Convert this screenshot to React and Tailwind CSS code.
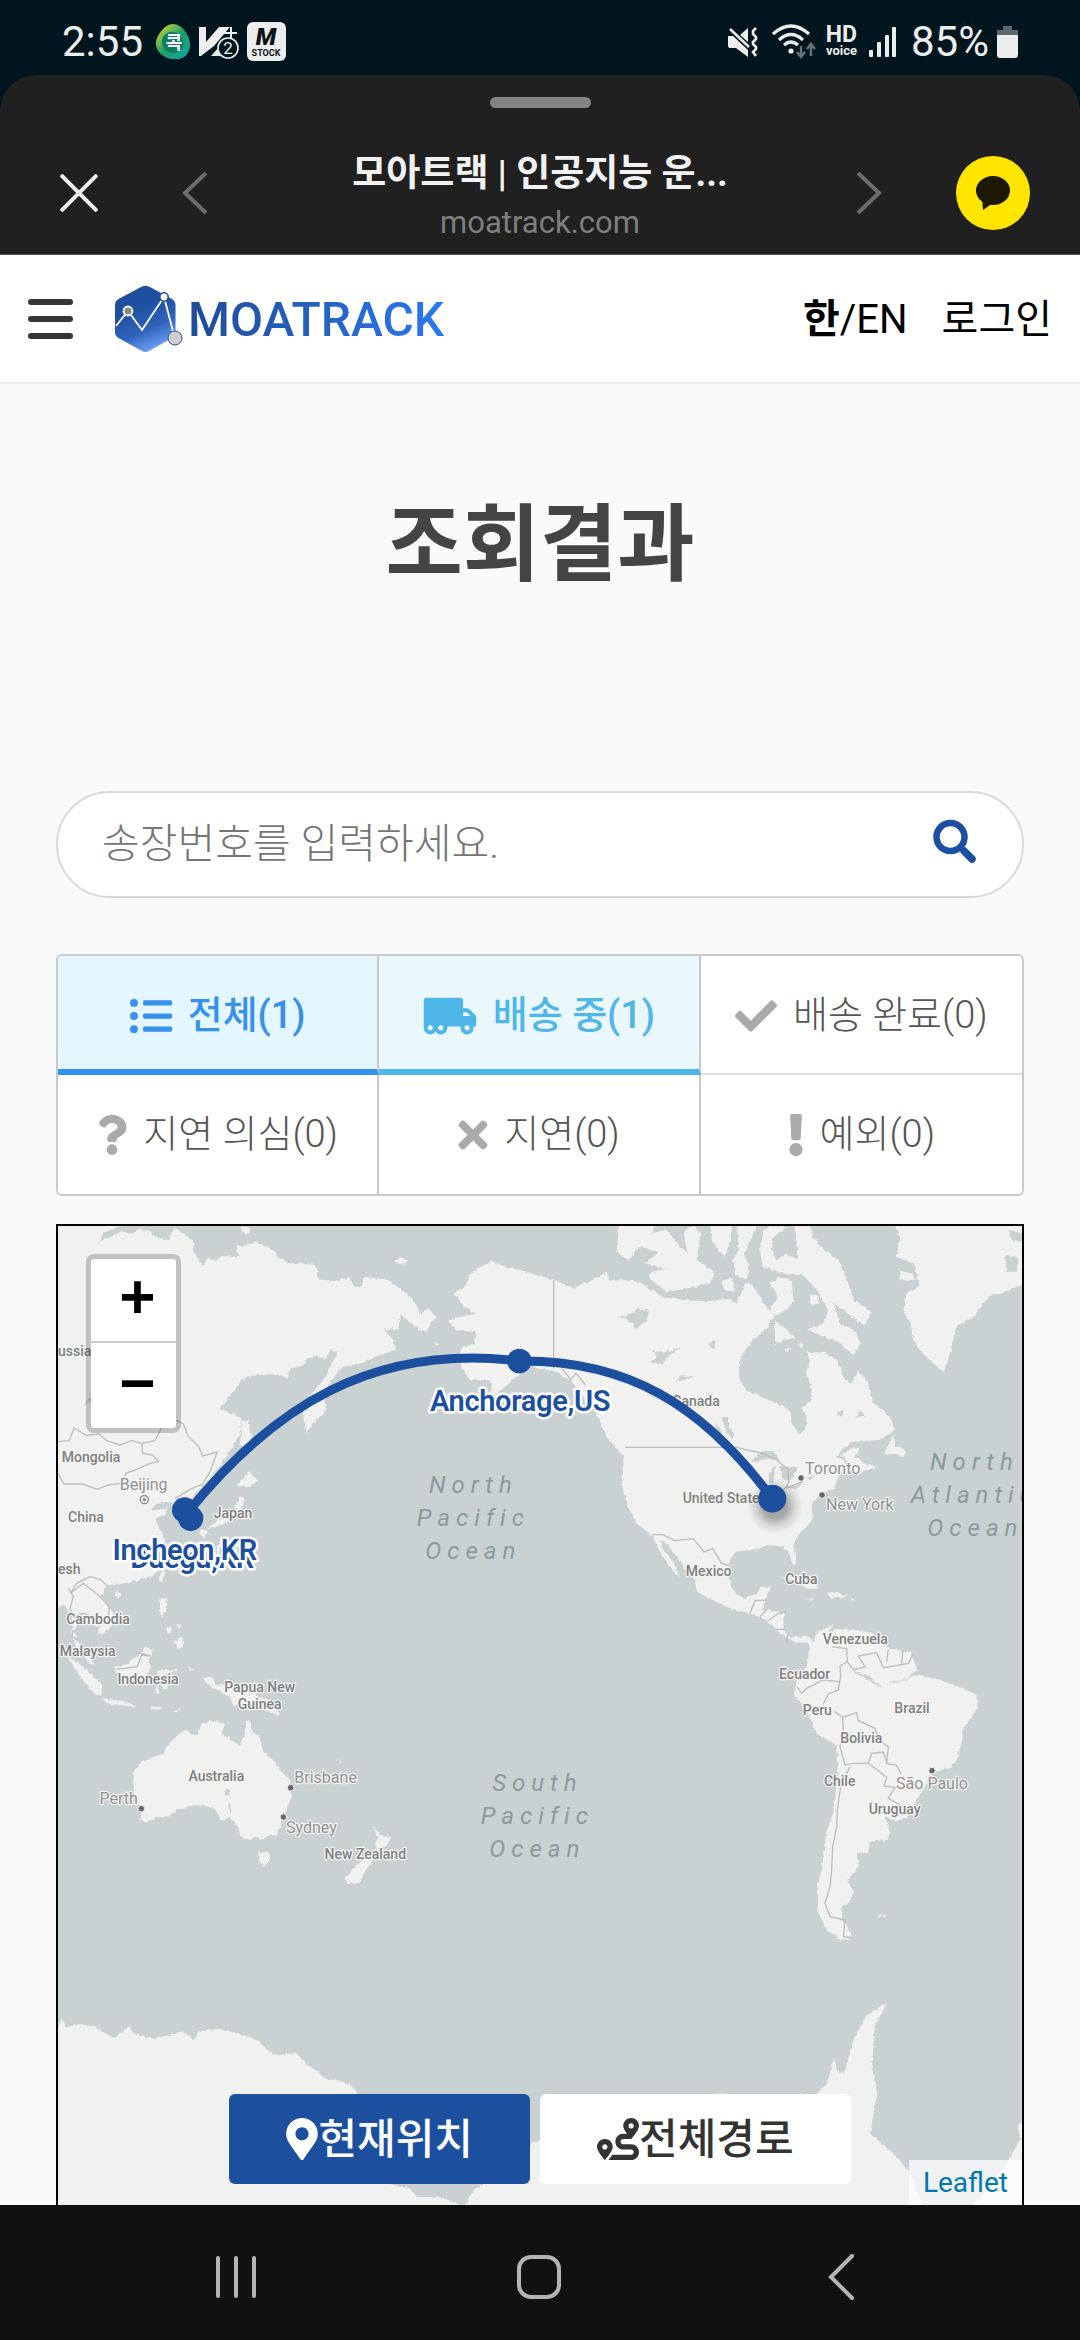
// src/App.jsx
import React from 'react';
import { FaTruckMoving, FaCheck, FaQuestion, FaTimes, FaExclamation, FaListUl, FaMapMarkerAlt, FaRoute } from 'react-icons/fa';

// Map drawing units are thirds of a pixel at full width
const LAND = [
  // Asia
  'M20 40H260L235 82L190 98L178 122L215 110L245 92L270 102L300 86L330 96L345 110L385 120L400 86L418 90L440 108L465 132L458 150L488 198L505 175L530 180L550 168L595 172L590 140L620 135L650 124L695 148L708 165L745 190L825 194L835 235L870 246L930 232L942 260L960 262L972 230L1045 240L1070 260L1112 290L1130 318L1140 342L1162 324L1190 352L1172 370L1160 398L1136 388L1110 365L1082 345L1078 388L1032 388L1060 420L1066 450L1010 468L970 488L910 500L890 520L850 580L858 632L826 662L800 700L788 640L805 600L862 520L892 455L870 448L860 478L830 468L800 476L790 496L752 506L740 536L712 522L640 526L605 540L580 575L538 628L580 642L606 656L598 705L575 745L530 810L480 868L458 890L482 940L476 976L440 980L412 935L395 905L350 912L330 932L380 925L375 945L345 955L365 1000L382 1050L370 1100L335 1128L285 1143L240 1152L195 1160L185 1190L205 1220L224 1248L220 1275L185 1305L172 1298L182 1280L150 1275L128 1262L112 1272L102 1292L112 1325L138 1352L165 1398L148 1390L110 1345L96 1310L96 1250L75 1215L20 1225Z',
  'M605 665L625 658L634 705L624 745L600 735Z',
  'M612 835L626 815L656 842L625 862L592 856Z',
  'M602 886L616 900L598 935L580 955L545 975L500 985L535 960L575 940Z',
  'M482 988L505 992L492 1012L478 1002Z',
  'M1063 188L1080 171L1105 182L1085 192Z',
  'M602 78L630 84L624 102L608 96Z',
  'M1175 424L1200 432L1196 438Z',
  'M225 1176L242 1178L236 1194L224 1190Z',
  'M366 1112L377 1120L364 1145L357 1135Z',
  'M362 1196L382 1194L378 1232L366 1250L358 1232Z',
  'M384 1330L410 1322L426 1305L430 1340L412 1348L408 1330Z',
  'M378 1280H394L392 1300H382ZM410 1272L422 1274L418 1290Z',
  'M80 1370L112 1386L150 1420L186 1455L184 1487L158 1478L125 1435Z',
  'M223 1402L262 1392L300 1362L318 1340L340 1352L326 1380L332 1408L300 1452L240 1442Z',
  'M186 1494L240 1502L288 1516L284 1522L200 1510Z',
  'M330 1520H370L362 1528H335ZM400 1530L422 1526L408 1538Z',
  'M352 1412L410 1406L412 1412L370 1424L385 1462L372 1466L358 1450L356 1480L346 1476Z',
  'M445 1398L456 1408L450 1420Z',
  'M488 1434L522 1430L526 1455L560 1450L620 1472L680 1500L722 1545L690 1536L640 1510L580 1518L570 1490L505 1455Z',
  // Australia and New Zealand
  'M280 1715L306 1682L370 1662L390 1625L420 1600L440 1590L455 1604L472 1605L485 1570L515 1562L555 1570L545 1600L600 1638L615 1600L618 1560L630 1560L636 1600L656 1605L670 1655L705 1685L720 1710L750 1740L755 1790L735 1840L712 1905L680 1908L668 1922L650 1910L630 1920L600 1908L595 1885L570 1850L545 1862L525 1828L495 1818L460 1815L410 1830L385 1850L350 1852L320 1868L300 1860L305 1830L282 1780Z',
  'M653 1958L690 1960L690 1982L672 2002L660 1985Z',
  'M995 1872L1022 1908L1055 1912L1038 1940L1010 1950L1004 1930L1015 1912Z',
  'M1000 1978L975 2015L960 2048L922 2052L915 2035L950 1995L985 1972Z',
  'M888 1672L910 1688L906 1690Z',
  // North and Central America
  'M1240 280L1275 260L1290 220L1355 183L1400 202L1430 208L1530 236L1555 244L1600 266L1650 240L1700 218L1708 242L1750 240L1800 246L1840 275L1870 292L1930 300L2000 304L2070 296L2090 312L2110 262L2125 248L2150 270L2165 300L2188 332L2212 290L2190 250L2215 230L2255 240L2260 300L2242 330L2205 345L2180 385L2130 430L2098 482L2098 535L2120 572L2210 610L2250 630L2255 662L2275 702L2295 690L2300 650L2285 625L2316 600L2312 550L2298 520L2308 480L2300 455L2355 458L2392 482L2410 530L2432 552L2455 515L2480 540L2500 608L2550 650L2565 690L2520 720L2440 725L2400 755L2392 775L2440 742L2462 745L2445 770L2480 795L2510 800L2450 822L2400 815L2382 868L2350 878L2318 905L2318 960L2280 1000L2258 1035L2272 1090L2262 1100L2245 1055L2230 1040L2180 1035L2150 1048L2085 1055L2065 1090L2065 1130L2078 1170L2110 1196L2150 1182L2160 1160L2192 1160L2178 1196L2165 1230L2232 1236L2230 1288L2250 1312L2300 1308L2308 1328L2265 1326L2238 1312L2208 1290L2182 1262L2130 1240L2075 1226L2010 1196L1970 1176L1965 1140L1940 1112L1910 1070L1880 1030L1858 1020L1870 1050L1900 1085L1918 1132L1892 1105L1862 1060L1838 1008L1790 970L1762 915L1745 855L1752 770L1735 750L1700 712L1668 640L1620 580L1590 540L1540 512L1470 500L1430 530L1395 560L1372 580L1340 592L1355 570L1352 540L1290 540L1260 492L1262 445L1302 432L1308 395L1250 392L1226 362L1262 350L1306 342L1272 318Z',
  'M1740 40L1850 40L1846 80L1822 130L1788 150L1765 182L1730 155Z',
  'M1852 96L1880 86L1912 132L1942 160L1930 92L1960 78L1982 100L1970 180L2024 218L2010 250L1960 262L1880 275L1830 236L1828 218L1878 206L1815 190L1855 158L1808 142L1822 105Z',
  'M2010 40L2080 40L2072 112L2056 172L2038 152L2015 120Z',
  'M2088 40L2148 40L2145 85L2130 125L2112 160L2128 205L2120 238L2085 226L2080 180L2096 150Z',
  'M2170 92L2190 78L2240 80L2200 110L2196 150L2210 182L2235 160L2272 178L2270 110L2255 40L2300 40L2318 112L2345 142L2370 160L2402 190L2422 240L2440 300L2494 335L2472 378L2430 345L2380 310L2400 370L2450 400L2462 430L2440 465L2392 425L2330 402L2302 388L2352 372L2364 330L2330 270L2290 226L2232 222L2168 200L2160 150Z',
  'M2205 362L2240 388L2268 416L2240 418L2205 432Z',
  'M2310 286L2334 284L2338 310L2312 314Z',
  'M2046 242L2075 235L2086 275L2050 270Z',
  'M2234 448L2254 442L2240 458ZM2272 430L2290 432L2284 445Z',
  'M2532 762L2560 704L2568 738L2592 745L2594 772L2560 762Z',
  'M2560 40L2568 85L2580 112L2568 170L2622 192L2638 258L2600 280L2590 330L2612 372L2622 420L2640 452L2680 490L2712 516L2730 460L2748 380L2800 350L2845 290L2900 272L2990 240V40Z',
  'M2580 212L2620 222L2624 240L2578 238Z',
  'M2215 1132L2260 1130L2305 1145L2338 1166L2300 1166L2285 1148Z',
  'M2358 1178L2390 1176L2420 1190L2375 1196ZM2300 1196L2322 1196L2312 1202ZM2430 1195L2446 1196L2440 1202Z',
  // South America
  'M2300 1308L2320 1330L2328 1298L2380 1274L2366 1300L2390 1286L2440 1290L2500 1300L2542 1345L2612 1356L2632 1410L2600 1432L2640 1424L2700 1440L2780 1470L2812 1488L2812 1525L2768 1588L2766 1630L2750 1680L2735 1702L2680 1720L2660 1750L2628 1802L2600 1852L2570 1864L2532 1850L2552 1895L2540 1920L2488 1925L2485 1958L2450 1958L2456 2000L2420 2042L2442 2075L2428 2108L2404 2120L2406 2158L2440 2214L2405 2220L2358 2188L2336 2140L2330 2070L2346 2000L2358 1900L2380 1840L2396 1700L2390 1635L2330 1600L2300 1530L2262 1482L2270 1440L2300 1398L2308 1350Z',
  'M2512 2150L2526 2144L2518 2154ZM2528 2146L2540 2144L2534 2154Z',
  // Antarctica
  'M20 2482H54L66 2455L78 2482L120 2472L160 2480L222 2514L265 2480L290 2505L340 2516L400 2502L425 2494L460 2518L476 2494L530 2486L590 2500L650 2518L700 2566L768 2560L800 2592L838 2618L850 2635L925 2650L960 2686L1000 2800L1040 2950L1110 2965L1130 2990L1200 2992L1260 3015L1270 3060H20Z',
  'M1260 3060L1275 3015L1300 2970L1340 2948L1440 2850L1500 2820L1700 2760L1950 2720L2040 2680L2100 2690L2330 2682L2362 2650L2382 2574L2396 2620L2412 2620L2440 2520L2476 2450L2540 2410L2504 2480L2496 2600L2512 2680L2490 2800L2560 2862L2610 2918L2645 3015V3060Z',
  'M2990 2764H2946L2932 2775L2942 2815L2905 2880L2860 2950L2800 3015V3060H2990Z',
];

const LAKES = [
  'M1732 350L1770 345L1790 325L1826 332L1822 362L1784 388L1778 366Z',
  'M1835 450L1870 458L1925 440L1890 465L1865 492L1832 488L1850 472Z',
  'M1905 545L1925 526L1965 530L1920 542Z',
  'M2008 428L2026 422L2022 448L2010 440Z',
  'M2045 655L2060 650L2078 700L2080 718L2058 695Z',
  'M2025 670L2045 690L2048 712L2030 700Z',
  'M2130 785L2165 755L2200 752L2220 785L2180 775L2150 785Z',
  'M2186 820L2205 795L2200 850L2188 850ZM2215 795L2275 805L2250 845L2232 840ZM2240 862L2290 850L2262 870ZM2296 832L2330 828L2310 840Z',
  'M2388 640L2412 628L2405 650ZM2448 650L2462 632L2475 650Z',
  'M556 1765L568 1768L566 1785L558 1785ZM564 1802L572 1815L568 1845Z',
  'M2422 1412L2480 1424L2525 1460L2510 1458L2470 1430ZM2545 1450L2620 1432L2570 1448Z',
  'M2905 90L2946 100V125L2915 120ZM2895 165L2935 175L2930 215L2900 215Z',
  'M150 590L160 600L128 618Z',
];

const BORDERS = [
  'M54 725L88 722L102 684L138 706L178 702L200 722L240 735L275 722L305 730L345 722L368 678L410 662L430 672L445 710L475 738L488 768L532 756L510 815L488 852L450 868L405 896',
  'M54 820L72 852H128L172 868L205 855L248 850L258 820L290 808L330 790L355 784L338 765L308 760L305 730',
  'M1541 240V505',
  'M1565 506L1582 525L1592 538L1608 520L1636 555',
  'M1755 742H2090L2120 750L2170 760L2210 780L2245 808L2245 850L2235 865L2290 845',
  'M1835 1004L1868 1004L1905 1022L1960 1016L1992 1056L2018 1045L2045 1090L2065 1096',
  'M2390 770L2400 772L2412 775L2420 792',
  'M85 1165L100 1190L90 1225L102 1250L130 1240L180 1260L205 1250L208 1220L175 1185L130 1150L92 1180L110 1150L150 1130L180 1138L205 1160',
  'M230 1408L292 1400L305 1365L332 1368L294 1358',
  'M98 1290L96 1310L112 1320',
  'M2130 1240L2145 1202L2180 1200M2160 1250L2178 1230M2185 1262L2215 1240L2238 1236M2208 1288H2235M2242 1305V1325',
  'M2375 1340L2420 1346L2422 1385L2400 1398L2402 1430L2395 1470L2365 1482L2350 1512M2270 1460L2285 1480L2300 1465L2350 1440L2398 1445M2422 1385L2440 1410L2475 1400L2455 1368L2510 1358L2530 1403L2605 1390L2618 1365M2545 1348L2540 1385M2588 1350L2585 1390',
  'M2384 1535L2408 1552L2450 1538L2455 1562L2505 1585L2515 1620L2545 1640L2540 1690L2568 1695L2584 1722M2408 1552L2410 1590L2400 1640L2415 1695L2440 1690L2485 1690L2495 1660L2530 1656L2540 1690M2485 1690L2540 1732L2532 1758L2565 1762L2545 1795L2590 1820',
  'M2430 1700L2402 1760L2392 1830L2390 1880L2378 1940L2375 2010L2370 2060L2355 2110L2370 2150L2415 2160L2410 2210L2440 2214',
];

// x, y, text, anchor
const COUNTRIES = [
  [54, 468, 'ussia', 'start'],
  [153, 785, 'Mongolia', 'middle'],
  [138, 966, 'China', 'middle'],
  [579, 955, 'Japan', 'middle'],
  [54, 1122, 'esh', 'start'],
  [174, 1272, 'Cambodia', 'middle'],
  [143, 1369, 'Malaysia', 'middle'],
  [324, 1451, 'Indonesia', 'middle'],
  [659, 1476, 'Papua New', 'middle'],
  [659, 1527, 'Guinea', 'middle'],
  [529, 1743, 'Australia', 'middle'],
  [976, 1977, 'New Zealand', 'middle'],
  [1968, 618, 'Canada', 'middle'],
  [1928, 908, 'United States', 'start'],
  [2006, 1127, 'Mexico', 'middle'],
  [2284, 1153, 'Cuba', 'middle'],
  [2446, 1332, 'Venezuela', 'middle'],
  [2294, 1437, 'Ecuador', 'middle'],
  [2332, 1545, 'Peru', 'middle'],
  [2616, 1539, 'Brazil', 'middle'],
  [2464, 1630, 'Bolivia', 'middle'],
  [2399, 1757, 'Chile', 'middle'],
  [2564, 1841, 'Uruguay', 'middle'],
];

const CITIES = [
  [311, 871, 'Beijing', 'middle'],
  [236, 1811, 'Perth', 'middle'],
  [763, 1749, 'Brisbane', 'start'],
  [738, 1899, 'Sydney', 'start'],
  [2295, 822, 'Toronto', 'start'],
  [2358, 930, 'New York', 'start'],
  [2676, 1767, 'São Paulo', 'middle'],
];

const CITY_DOTS = [
  [304, 1826],
  [752, 1763],
  [730, 1851],
  [2283, 834],
  [2346, 885],
  [2676, 1712],
];

const OCEANS = [
  [1300, 880, ['North', 'Pacific', 'Ocean']],
  [1492, 1774, ['South', 'Pacific', 'Ocean']],
];

const ROUTE_LABELS = [
  [456, 1105, 'Daegu,KR'],
  [434, 1079, 'Incheon,KR'],
  [1440, 632, 'Anchorage,US'],
];

const FILTERS = [
  { id: 'all', label: '전체(1)', Icon: FaListUl, cls: 'bg-[#e4f6ff] text-[#3691ea] font-medium border-r-2 border-b-6 border-b-[#3691ea] pt-[6px]', icon: 'w-[42px]' },
  { id: 'moving', label: '배송 중(1)', Icon: FaTruckMoving, cls: 'bg-[#eaf7fd] text-[#4fb7e8] font-medium border-r-2 border-b-6 border-b-[#4fb7e8] pt-[6px]', icon: 'w-[54px]' },
  { id: 'done', label: '배송 완료(0)', Icon: FaCheck, cls: 'bg-white text-[#555] font-light border-b-2 border-b-[#ddd] pt-[2px]', icon: 'w-[42px] text-[#aaa]' },
  { id: 'suspect', label: '지연 의심(0)', Icon: FaQuestion, cls: 'bg-white text-[#555] font-light border-r-2', icon: 'w-[30px] text-[#aaa]' },
  { id: 'delayed', label: '지연(0)', Icon: FaTimes, cls: 'bg-white text-[#555] font-light border-r-2', icon: 'w-[30px] text-[#aaa]' },
  { id: 'exception', label: '예외(0)', Icon: FaExclamation, cls: 'bg-white text-[#555] font-light', icon: 'w-[16px] text-[#aaa]' },
];

const StatusBar = () => (
  <div className="h-[75px] bg-[#00151e] text-[#eceeee] flex items-center justify-between pt-2 px-[62px]">
    <div className="flex items-center gap-2">
      <span className="text-[42px] leading-none mr-1">2:55</span>
      <svg className="w-[36px] h-[38px]" viewBox="0 0 36 38">
        <defs>
          <linearGradient id="blob" x1="0" y1="0" x2="1" y2="1">
            <stop offset="0.1" stopColor="#c6d531" />
            <stop offset="0.5" stopColor="#1e9e6a" />
            <stop offset="1" stopColor="#12a3a8" />
          </linearGradient>
        </defs>
        <path d="M18 1C27 1 36 13 35 23C34 33 27 37 19 36C9 36 0 28 1 19C2 12 10 1 18 1Z" fill="url(#blob)" />
        <path d="M8 14C14 5 26 8 28 18C30 28 20 33 12 28C7 25 6 19 8 14Z" fill="#0f7c62" />
        <text x="19" y="26" textAnchor="middle" fontSize="18" fontWeight="700" fill="#fff">콕</text>
      </svg>
      <svg className="w-[40px] h-[34px]" viewBox="0 0 40 34">
        <path d="M0 2H7V17L20 2H31L20 15L15 21L2 31H0Z" fill="#eceeee" />
        <path d="M12 31L20 22L22 31Z" fill="#eceeee" />
        <path d="M25 8H38M32 2V13" stroke="#eceeee" strokeWidth="2" />
        <circle cx="29" cy="23" r="10" fill="#00151e" stroke="#eceeee" strokeWidth="1.6" />
        <text x="29" y="29" textAnchor="middle" fontSize="17" fill="#eceeee">2</text>
      </svg>
      <svg className="w-[39px] h-[39px]" viewBox="0 0 39 39">
        <rect width="39" height="39" rx="6" fill="#eceeee" />
        <text x="19" y="23" textAnchor="middle" fontSize="24" fontWeight="900" fontStyle="italic" fill="#0b1316">M</text>
        <text x="19" y="34" textAnchor="middle" fontSize="9" fontWeight="700" fill="#0b1316">STOCK</text>
      </svg>
    </div>
    <div className="flex items-center">
      <svg className="w-[30px] h-[30px]" viewBox="0 0 30 30" fill="none" stroke="#eceeee">
        <path d="M0 9H5L20 23V30L8 21H2Q0 21 0 19ZM12 8L20 1V15Z" fill="#eceeee" stroke="none" />
        <path d="M2 2L21 20" strokeWidth="2.6" />
        <path d="M28 1L25 4V7L28 10V12L25 15V17L28 20V22L25 25L28 29" strokeWidth="2.6" />
      </svg>
      <svg className="w-[46px] h-[36px] ml-[14px]" viewBox="0 0 46 36" fill="none" stroke="#eceeee" strokeWidth="3.2">
        <path d="M1 10Q19 -6 37 10M7 16Q19 5 31 16M12 21Q19 15 26 21" />
        <circle cx="19" cy="27" r="2.6" fill="#eceeee" stroke="none" />
        <path d="M29 22V32M25 28L29 33L33 28M39 32V21M35 25L39 20L43 25" stroke="#66757b" strokeWidth="2.4" />
      </svg>
      <div className="ml-2 flex flex-col items-center font-bold">
        <span className="text-[23px] leading-[18px]">HD</span>
        <span className="text-[13px] leading-[14px]">voice</span>
      </div>
      <svg className="w-[28px] h-[30px] ml-[12px]" viewBox="0 0 28 30" fill="#eceeee">
        <rect x="0" y="23" width="4" height="7" rx="1" />
        <rect x="8" y="15" width="4" height="15" rx="1" />
        <rect x="16" y="8" width="4" height="22" rx="1" />
        <rect x="23" y="0" width="4" height="30" rx="1" />
      </svg>
      <span className="text-[42px] leading-none ml-[14px]">85%</span>
      <svg className="w-[21px] h-[32px] ml-2" viewBox="0 0 21 32">
        <path d="M6 0H15V4H21V12H0V4H6Z" fill="#5b686e" />
        <path d="M0 9H21V29Q21 32 18 32H3Q0 32 0 29Z" fill="#eceeee" />
      </svg>
    </div>
  </div>
);

const BrowserBar = () => (
  <div className="bg-[#00151e]">
    <div className="h-[180px] rounded-t-[36px] bg-[#202020] border-b border-[#555] flex flex-col">
      <div className="w-[101px] h-[11px] rounded-full bg-[#838383] mx-auto mt-[22px]" />
      <div className="flex-1 flex items-center justify-between pt-6 pl-[60px] pr-[50px]">
        <button aria-label="닫기" className="w-[38px] shrink-0">
          <svg viewBox="0 0 38 38" stroke="#eee" strokeWidth="4"><path d="M1 1L37 37M37 1L1 37" /></svg>
        </button>
        <button aria-label="이전" className="w-[26px] shrink-0 ml-[84px]">
          <svg viewBox="0 0 26 44" fill="none" stroke="#6b6b6b" strokeWidth="4"><path d="M24 2L3 22L24 42" /></svg>
        </button>
        <div className="flex-1 text-center pl-4 pt-[10px]">
          <div className="text-[37px] leading-[50px] font-bold text-[#f2f2f2]">모아트랙 | 인공지능 운...</div>
          <div className="text-[31px] leading-[48px] text-[#7e7e7e]">moatrack.com</div>
        </div>
        <button aria-label="다음" className="w-[26px] shrink-0 mr-[74px]">
          <svg viewBox="0 0 26 44" fill="none" stroke="#6b6b6b" strokeWidth="4"><path d="M2 2L23 22L2 42" /></svg>
        </button>
        <button aria-label="카카오톡 공유" className="w-[74px] shrink-0">
          <svg viewBox="0 0 74 74">
            <circle cx="37" cy="37" r="37" fill="#ffe500" />
            <ellipse cx="37" cy="34.5" rx="17" ry="14.5" fill="#1c1900" />
            <path d="M26 42L27 54L37 47Z" fill="#1c1900" />
          </svg>
        </button>
      </div>
    </div>
  </div>
);

const SiteHeader = () => (
  <header className="h-[129px] bg-white border-b-2 border-[#eee] flex items-center justify-between px-[28px]">
    <div className="flex items-center">
      <button aria-label="메뉴" className="w-[45px] flex flex-col gap-[11px]">
        <span className="h-[6px] w-full rounded-full bg-[#363636]" />
        <span className="h-[6px] w-full rounded-full bg-[#363636]" />
        <span className="h-[6px] w-full rounded-full bg-[#363636]" />
      </button>
      <a href="#home" className="flex items-center ml-[42px] gap-[5px]">
        <svg className="w-[68px] h-[68px]" viewBox="0 0 68 68">
          <defs>
            <linearGradient id="hex" x1="0.3" y1="0" x2="0.7" y2="1">
              <stop offset="0.3" stopColor="#1f4f9f" />
              <stop offset="0.65" stopColor="#2f63bb" />
              <stop offset="1" stopColor="#78a9ff" />
            </linearGradient>
          </defs>
          <path d="M27 1.5Q30.5 0 34 1.5L57 14Q60.5 16 60.5 20V47Q60.5 51 57 53L34 66Q30.5 68 27 66L3.5 53Q0 51 0 47V20Q0 16 3.5 14Z" fill="url(#hex)" />
          <path d="M1 41L13 26L27 45L49 12L59 50" fill="none" stroke="#fff" strokeWidth="1.8" />
          <circle cx="13" cy="26" r="4.5" fill="#8a8a8a" stroke="#fff" strokeWidth="1.8" />
          <circle cx="49" cy="12" r="5" fill="#1f4f9f" />
          <circle cx="49" cy="12" r="3.4" fill="#fff" />
          <circle cx="60" cy="53" r="7" fill="#cfcfd3" stroke="#1f4f9f" strokeWidth="1" />
        </svg>
        <span className="text-[48px] leading-none pt-[2px] font-medium bg-gradient-to-r from-[#1f4c98] to-[#2b78f0] bg-clip-text text-transparent">MOATRACK</span>
      </a>
    </div>
    <nav className="flex items-center gap-[34px] pt-[2px] text-[40px] leading-none text-black">
      <button><b className="font-bold">한</b>/EN</button>
      <a href="#login">로그인</a>
    </nav>
  </header>
);

const SearchBox = () => (
  <form className="flex items-center h-[107px] rounded-full border-2 border-[#d9d9d9] bg-white pl-[44px] pr-[46px]">
    <input
      type="text"
      aria-label="송장번호"
      placeholder="송장번호를 입력하세요."
      className="flex-1 min-w-0 text-[41px] font-light outline-none placeholder:text-[#757575]"
    />
    <button type="button" aria-label="검색" className="w-[44px] mb-2">
      <svg viewBox="0 0 44 44" fill="none" stroke="#1c4fa1">
        <circle cx="18.5" cy="18" r="14" strokeWidth="6.5" />
        <path d="M32 32L40 40" strokeWidth="7.5" strokeLinecap="round" />
      </svg>
    </button>
  </form>
);

const FilterTabs = () => (
  <div className="mt-[56px] grid grid-cols-3 auto-rows-[119px] rounded-md border-2 border-[#c9c9c9] overflow-hidden">
    {FILTERS.map(({ id, label, Icon, cls, icon }) => (
      <button key={id} className={`flex items-center justify-center gap-4 text-[38px] border-[#c9c9c9] ${cls}`}>
        <Icon className={`h-[42px] ${icon}`} />
        {label}
      </button>
    ))}
  </div>
);

const WorldMap = () => (
  <svg className="block w-full h-auto bg-[#c9d1d3]" viewBox="54 78 2892 2937">
    <defs>
      <filter id="coast" x="0" y="0" width="1" height="1" colorInterpolationFilters="sRGB">
        <feTurbulence type="fractalNoise" baseFrequency="0.08" numOctaves="3" seed="4" result="n" />
        <feDisplacementMap in="SourceGraphic" in2="n" scale="12" xChannelSelector="R" yChannelSelector="G" />
      </filter>
      <radialGradient id="pinShadow">
        <stop offset="0.4" stopColor="#333" stopOpacity="0.4" />
        <stop offset="0.7" stopColor="#333" stopOpacity="0.14" />
        <stop offset="1" stopColor="#333" stopOpacity="0" />
      </radialGradient>
    </defs>
    <g filter="url(#coast)">
      <rect x="20" y="40" width="2970" height="3020" fill="#c9d1d3" />
      {LAND.map((d) => (
        <path key={d} d={d} fill="#f1f2f0" />
      ))}
      {LAKES.map((d) => (
        <path key={d} d={d} fill="#c9d1d3" />
      ))}
    </g>
    {BORDERS.map((d) => (
      <path key={d} d={d} fill="none" stroke="#bdbdbb" strokeWidth="4" />
    ))}

    <g fontFamily="Roboto, sans-serif" stroke="#f4f5f4" strokeWidth="7" strokeLinejoin="round" paintOrder="stroke">
      {COUNTRIES.map(([x, y, text, anchor]) => (
        <text key={text} x={x} y={y} textAnchor={anchor} fontSize="42" fontWeight="500" fill="#808080">{text}</text>
      ))}
      {CITIES.map(([x, y, text, anchor]) => (
        <text key={text} x={x} y={y} textAnchor={anchor} fontSize="48" fill="#919191">{text}</text>
      ))}
    </g>
    {CITY_DOTS.map(([x, y]) => (
      <circle key={x} cx={x} cy={y} r="10" fill="#666" stroke="#f4f5f4" strokeWidth="3" />
    ))}
    <circle cx="313" cy="899" r="12" fill="none" stroke="#888" strokeWidth="4" />
    <circle cx="313" cy="899" r="5" fill="#888" />

    <g fontFamily="Roboto, sans-serif" fontStyle="italic" fontSize="72" letterSpacing="18" fill="#8b9b9b">
      {OCEANS.map(([x, y, lines]) =>
        lines.map((line, i) => (
          <text key={y + line} x={x} y={y + i * 99} textAnchor="middle">{line}</text>
        ))
      )}
      <text x="2670" y="810">North</text>
      <text x="2612" y="910">Atlantic</text>
      <text x="2662" y="1008">Ocean</text>
    </g>

    {/* Route */}
    <circle cx="2205" cy="918" r="85" fill="url(#pinShadow)" />
    <path d="M445 935C700 620 1000 430 1438 483C1760 480 1985 610 2197 896" fill="none" stroke="#1d4f9f" strokeWidth="27" />
    <circle cx="434" cy="930" r="38" fill="#1d4f9f" />
    <circle cx="452" cy="955" r="38" fill="#1d4f9f" />
    <circle cx="1438" cy="483" r="37" fill="#1d4f9f" />
    <circle cx="2197" cy="896" r="42" fill="#1d4f9f" />
    <g fontFamily="Roboto, sans-serif" fontSize="87" fontWeight="600" letterSpacing="-1" fill="#1d4f9f" stroke="#fff" strokeWidth="15" strokeLinejoin="round" paintOrder="stroke">
      {ROUTE_LABELS.map(([x, y, text]) => (
        <text key={text} x={x} y={y} textAnchor="middle">{text}</text>
      ))}
    </g>
  </svg>
);

const MapPanel = () => (
  <section className="relative mt-[28px] border-2 border-b-0 border-black overflow-hidden">
    <WorldMap />
    <div className="absolute top-[28px] left-[28px] w-[95px] rounded-lg border-5 border-black/20 bg-clip-padding bg-white divide-y-2 divide-[#ccc] flex flex-col text-black font-['DejaVu_Sans_Mono',monospace] font-bold text-[58px] leading-none">
      <button aria-label="확대" className="h-[84px] pl-2 pb-2 flex items-center justify-center">+</button>
      <button aria-label="축소" className="h-[85px] pl-2 pb-2 flex items-center justify-center">−</button>
    </div>
    <div className="absolute bottom-[21px] inset-x-0 flex justify-center gap-[10px] text-[42px] font-medium">
      <button className="h-[90px] px-[57px] rounded-md bg-[#1d4f9f] text-white flex items-center">
        <FaMapMarkerAlt className="h-[42px] w-[32px]" />
        현재위치
      </button>
      <button className="h-[90px] px-[57px] rounded-md bg-white text-[#333] flex items-center">
        <FaRoute className="h-[42px] w-[42px]" />
        전체경로
      </button>
    </div>
    <div className="absolute bottom-0 right-0 h-[45px] px-[14px] bg-white/70 flex items-center">
      <a href="#leaflet" className="text-[28px] leading-none text-[#0078a8]">Leaflet</a>
    </div>
  </section>
);

const SystemNav = () => (
  <div className="h-[135px] bg-[#111] flex items-center justify-between pl-[214px] pr-[217px] pt-[8px]">
    <button aria-label="최근 앱" className="w-[44px] h-[42px] px-[2px] flex justify-between">
      <span className="w-[4px] h-full rounded-full bg-[#b4b4b4]" />
      <span className="w-[4px] h-full rounded-full bg-[#b4b4b4]" />
      <span className="w-[4px] h-full rounded-full bg-[#b4b4b4]" />
    </button>
    <button aria-label="홈" className="w-[44px] h-[44px] rounded-[14px] border-4 border-[#b4b4b4]" />
    <button aria-label="뒤로" className="w-[44px] px-[9px]">
      <svg viewBox="0 0 26 46" fill="none" stroke="#b4b4b4" strokeWidth="4" strokeLinecap="round"><path d="M24 2L3 23L24 44" /></svg>
    </button>
  </div>
);

const App = () => (
  <div className="min-h-screen flex flex-col bg-[#fafafa] font-[Roboto,'Noto_Sans_CJK_KR',sans-serif]">
    <StatusBar />
    <BrowserBar />
    <SiteHeader />
    <main className="flex-1 px-[56px]">
      <h1 className="text-center text-[84px] leading-[120px] font-bold text-[#444] pt-[102px] pb-[185px]">조회결과</h1>
      <SearchBox />
      <FilterTabs />
      <MapPanel />
    </main>
    <SystemNav />
  </div>
);

export default App;
